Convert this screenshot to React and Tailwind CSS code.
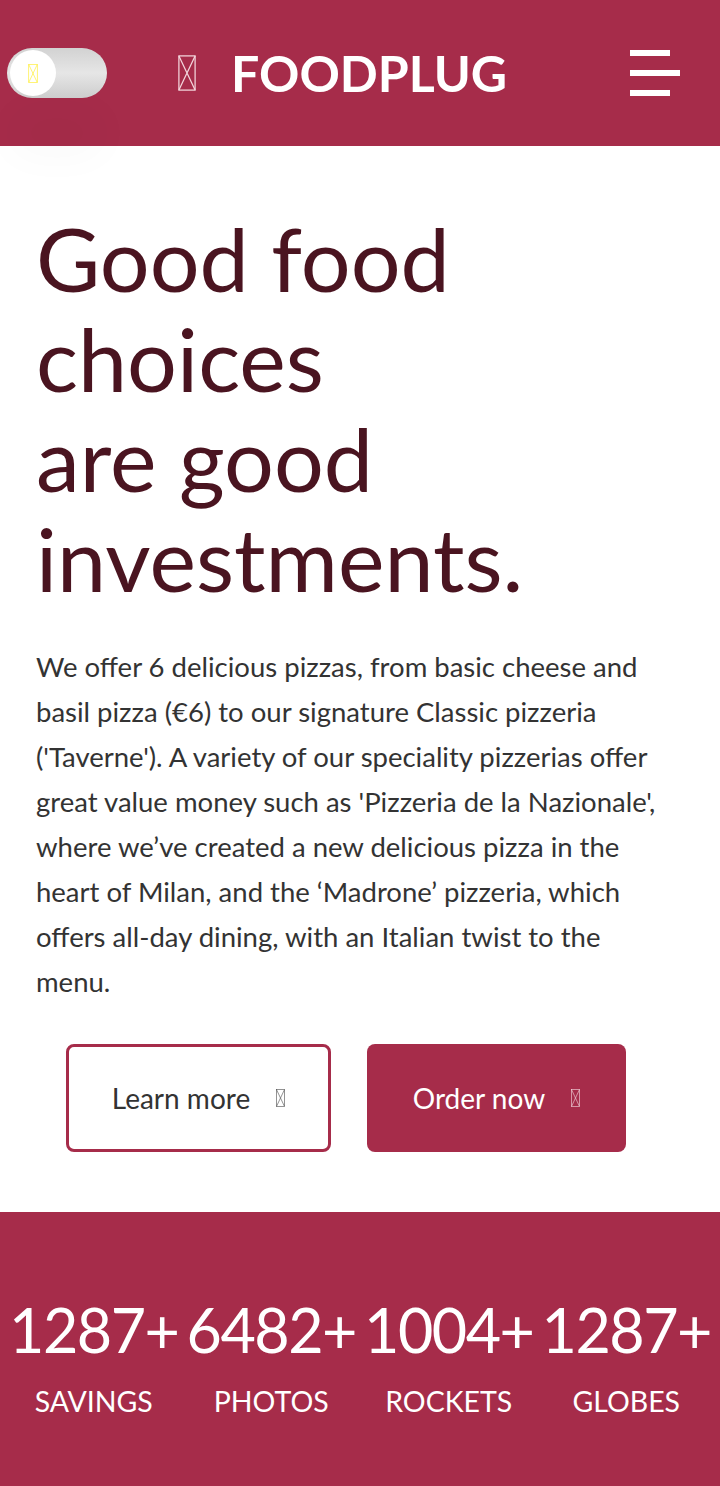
import React from 'react'

const lato = { fontFamily: 'Lato, "Open Sans", sans-serif' }

// missing-glyph box the icon font leaves behind
function Tofu({ className }) {
  return (
    <svg viewBox="0 0 10 20" fill="none" stroke="currentColor" strokeWidth="0.7" className={className}>
      <rect x="0.5" y="0.5" width="9" height="19" />
      <path d="M0.5 0.5L9.5 19.5M9.5 0.5L0.5 19.5" />
    </svg>
  )
}

function Header() {
  return (
    <header className="relative z-10 bg-[#a62c4a] h-[146px] flex items-center pl-[7px] pr-10">
      <button className="w-[100px] h-[50px] rounded-full bg-gradient-to-b from-[#d2d2d2] via-[#e6e6e6] to-[#cdcdcd] shadow-[0_60px_40px_rgba(0,0,0,0.025)] flex items-center px-[3px]">
        <span className="w-[46px] h-[46px] rounded-full bg-white flex items-center justify-center text-[#ffee33]">
          <Tofu className="w-[10px] h-[19px]" />
        </span>
      </button>
      <div className="flex items-center gap-[35px] text-white ml-[71px]">
        <Tofu className="w-[18px] h-[36px] text-[#f3d5dc]" />
        <span className="text-[50px] font-bold leading-none">FOODPLUG</span>
      </div>
      <div className="flex flex-col gap-[14px] items-start ml-auto">
        <span className="block w-10 h-[6px] bg-white" />
        <span className="block w-[50px] h-[6px] bg-white" />
        <span className="block w-10 h-[6px] bg-white" />
      </div>
    </header>
  )
}

function Hero() {
  return (
    <section className="bg-white px-9 pt-[62px] pb-[60px]">
      <h1 className="text-[#4a1420] text-[88px] leading-[100px] font-normal">
        Good food choices
        <br />
        are good investments.
      </h1>
      <p className="mt-[36px] w-[636px] text-[#333] text-[27.5px] leading-[45px]">
        We offer 6 delicious pizzas, from basic cheese and basil pizza (€6) to our signature Classic pizzeria ('Taverne'). A variety of our speciality pizzerias offer great value money such as 'Pizzeria de la Nazionale', where we’ve created a new delicious pizza in the heart of Milan, and the ‘Madrone’ pizzeria, which offers all-day dining, with an Italian twist to the menu.
      </p>
      <div className="flex gap-9 mt-[40px] pl-[30px]">
        <button className="w-[265px] h-[108px] border-[3px] border-[#a62c4a] rounded-lg bg-white text-[#333] text-[28px] flex items-center justify-center gap-[26px]">
          Learn more
          <Tofu className="w-[9px] h-[18px] text-[#555]" />
        </button>
        <button className="w-[259px] h-[108px] rounded-lg bg-[#a62c4a] text-white text-[28px] flex items-center justify-center gap-[26px]">
          Order now
          <Tofu className="w-[9px] h-[18px] text-[#f3d5dc]" />
        </button>
      </div>
    </section>
  )
}

const stats = [
  ['1287+', 'SAVINGS'],
  ['6482+', 'PHOTOS'],
  ['1004+', 'ROCKETS'],
  ['1287+', 'GLOBES'],
]

function Stats() {
  return (
    <section className="bg-[#a62c4a] px-[5px] pt-[83px] pb-[80px] grid grid-cols-4 text-white text-center">
      {stats.map(([n, l], i) => (
        <div key={i} className="flex flex-col items-center">
          <span className="text-[61px] leading-[70px] tracking-tight whitespace-nowrap">{n}</span>
          <span className="text-[28.5px] leading-[40px] mt-[16px]">{l}</span>
        </div>
      ))}
    </section>
  )
}

export default function App() {
  return (
    <div className="w-[720px] min-h-[1486px] bg-white overflow-hidden" style={lato}>
      <Header />
      <Hero />
      <Stats />
    </div>
  )
}
